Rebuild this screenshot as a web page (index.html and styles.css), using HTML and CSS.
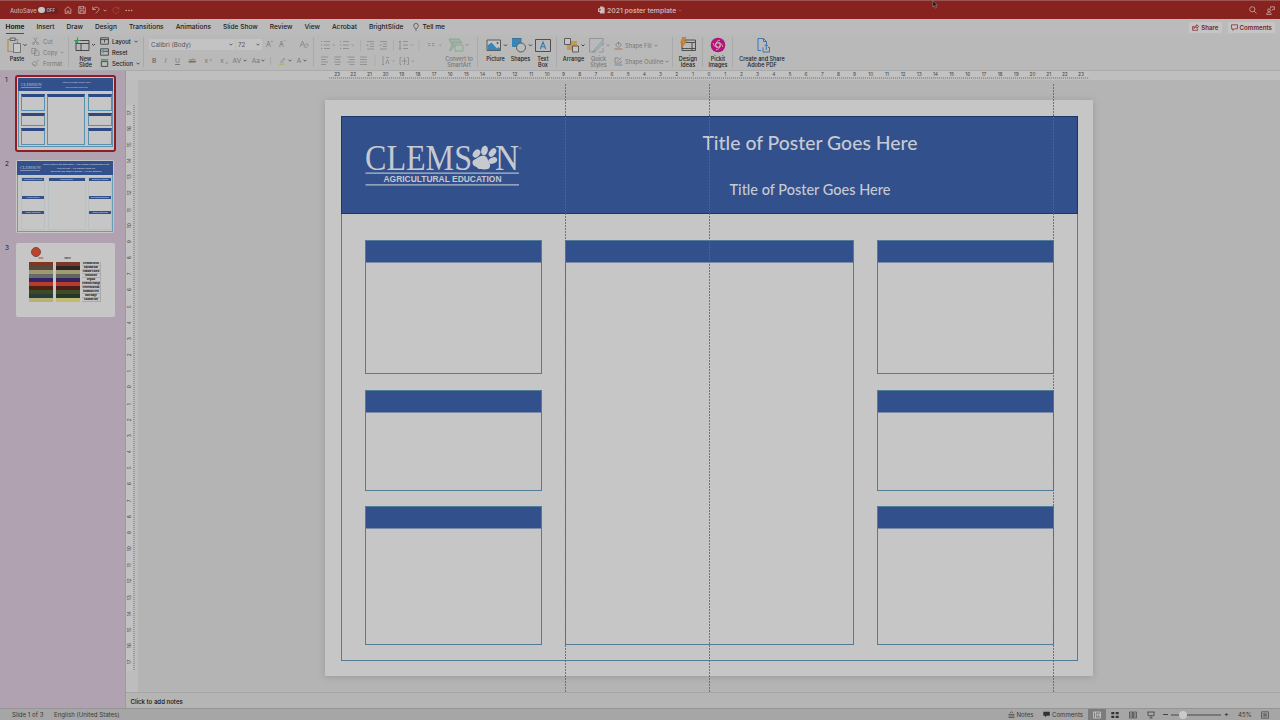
FILE: index.html
```html
<!DOCTYPE html>
<html lang="en">
<head>
    <meta charset="UTF-8">
    <meta name="viewport" content="width=device-width, initial-scale=1.0">
    <title>2021 poster template</title>
    <link rel="stylesheet" href="styles.css">
</head>
<body>
    <header class="titlebar">
        <div class="quick">
            <span class="autosave">AutoSave</span>
            <span class="toggle"><i></i>OFF</span>
            <svg class="qi" width="8" height="8" viewBox="0 0 8 8"><path d="M.7 3.8 4 .7l3.3 3.1M1.2 3.4v4h2V5h1.6v2.4h2v-4"/></svg>
            <svg class="qi" width="8" height="8" viewBox="0 0 8 8"><path d="M.7.7h5.6l1 1v5.6H.7zM2 .7v2.2h3.6V.7M2 7.3V4.8h4v2.5"/></svg>
            <svg class="qi undo" width="8" height="8" viewBox="0 0 8 8"><path d="M.8.6v2.9h3M.9 3.4C2.5.4 6.9.6 7 3.3 7 4.8 5 5.8 3.8 7.4"/></svg>
            <svg class="caret light" viewBox="0 0 4 3"><path d="M.5.7 2 2.2 3.5.7"/></svg>
            <svg class="qi redo" width="8" height="8" viewBox="0 0 8 8"><path d="M6.8 1v2h-2M6.7 2.7A3.1 3.1 0 1 0 7 5"/></svg>
            <svg class="dots" width="8" height="3" viewBox="0 0 8 3"><circle cx="1.2" cy="1.5" r=".8"/><circle cx="3.9" cy="1.5" r=".8"/><circle cx="6.6" cy="1.5" r=".8"/></svg>
        </div>
        <div class="doc-name">
            <svg width="7" height="8" viewBox="0 0 7 8"><path d="M2 .4h3L6.7 2v5.6H2z" fill="#c9b5b3"/><path d="M.2 2.3h4v3.8h-4z" fill="#e0d0cf"/><path d="M1.6 5.4V3h1q.8.8 0 1.4h-1" fill="none" stroke="#8a221e" stroke-width=".6"/></svg>
            <span>2021 poster template</span>
            <svg class="caret dim" viewBox="0 0 4 3"><path d="M.5.7 2 2.2 3.5.7"/></svg>
        </div>
        <div class="title-right">
            <svg class="qi" width="8" height="8" viewBox="0 0 8 8"><circle cx="3.3" cy="3.3" r="2.6"/><path d="M5.2 5.2 7.5 7.5"/></svg>
            <svg class="qi" width="9" height="9" viewBox="0 0 9 9"><circle cx="3" cy="4.2" r="1.4"/><path d="M.6 8.4c0-2.8 4.6-2.8 4.6 0zM4.6 2.3V.8h3.8v2.7H6.8L5.6 4.6"/></svg>
        </div>
        <svg class="cursor" width="6" height="9" viewBox="0 0 6 9"><path d="M.8.5v6.3l1.5-1.3 1 2.6 1.2-.5-1-2.4h1.8z" fill="#111" stroke="#aaa" stroke-width=".5"/></svg>
    </header>

    <nav class="tabbar">
        <div class="tabs">
            <span class="active">Home</span><span>Insert</span><span>Draw</span><span>Design</span><span>Transitions</span><span>Animations</span><span>Slide Show</span><span>Review</span><span>View</span><span>Acrobat</span><span>BrightSlide</span>
        </div>
        <div class="tell">
            <svg width="6" height="8" viewBox="0 0 6 8"><path d="M2 5.6C2 4.6.7 4.2.7 2.7a2.3 2.3 0 0 1 4.6 0C5.3 4.2 4 4.6 4 5.6zM2.2 7.2h1.6" fill="none" stroke="#333" stroke-width=".6"/></svg>
            <span>Tell me</span>
        </div>
        <div class="tab-right">
            <span class="pill"><svg width="7" height="7" viewBox="0 0 7 7"><path d="M2.4 2.5H.6v3.8h5V4.6M1.9 4.6c.2-2 1.3-2.7 2.8-2.7V.7l2 1.8-2 1.7V3C3.3 3 2.6 3.5 1.9 4.6z"/></svg>Share</span>
            <span class="pill"><svg width="7" height="7" viewBox="0 0 7 7"><path d="M.5.8h6v4H3.3L1.9 6.3V4.8H.5z"/></svg>Comments</span>
        </div>
    </nav>

    <section class="ribbon">
        <div class="group g-clip">
            <div class="big paste">
                <svg width="20" height="16" viewBox="0 0 20 16"><path d="M1 2.5h9.5v12H1z" fill="none" stroke="#c08a3e" stroke-width="1.2"/><path d="M3.2 1h5v2.5h-5z" fill="#b9b9b9" stroke="#444" stroke-width=".7"/><path d="M6.5 6.5h7v9h-7z" fill="#c6c6c6" stroke="#555" stroke-width=".7"/><path d="M16.5 7.2 18 8.7l1.5-1.5" fill="none" stroke="#333" stroke-width=".9"/></svg>
                <span>Paste</span>
            </div>
            <div class="rows off">
                <div><svg width="9" height="8" viewBox="0 0 9 8"><path d="M2.8.5 6 6M6.2.5 3 6"/><circle cx="2.4" cy="6.5" r="1"/><circle cx="6.6" cy="6.5" r="1"/></svg>Cut</div>
                <div><svg width="9" height="8" viewBox="0 0 9 8"><path d="M.8.5h4v5h-4zM3.5 2.2h3l1.5 1.5v4H3.5z"/></svg>Copy<svg class="caret" viewBox="0 0 4 3"><path d="M.5.7 2 2.2 3.5.7"/></svg></div>
                <div><svg width="9" height="8" viewBox="0 0 9 8"><path d="M8 .8 5.5 3M3.5 2.2l3 2.8-2 1.5L1 4.8z"/><path d="m1.5 6 3 1.5" stroke="#a98a5c"/></svg>Format</div>
            </div>
        </div>

        <div class="group g-slides">
            <div class="big newslide">
                <svg width="23" height="16" viewBox="0 0 23 16"><path d="M2 3.5h13v10H2zM2 6.5h13M7 6.5v7" fill="none" stroke="#3c3c3c" stroke-width=".9"/><path d="M3.5.5v6M.3 3.5h6.2" stroke="#2f9a55" stroke-width="1.1"/><path d="m18 7 1.5 1.5L21 7" fill="none" stroke="#333" stroke-width=".9"/></svg>
                <span>New<br>Slide</span>
            </div>
            <div class="rows">
                <div><svg width="9" height="8" viewBox="0 0 9 8"><path d="M.6.8h7.8v6.4H.6zM.6 2.6h7.8M4.5 2.6v2.8"/></svg>Layout<svg class="caret" viewBox="0 0 4 3"><path d="M.5.7 2 2.2 3.5.7"/></svg></div>
                <div><svg width="9" height="8" viewBox="0 0 9 8"><path d="M.6.8h7.8v6.4H.6zM3 3.3h5"/><path d="M3.8 1.5 1.5 3.3 3.8 5" stroke="#2d7fb5"/></svg>Reset</div>
                <div><svg width="9" height="8" viewBox="0 0 9 8"><path d="M1.3 2.6h6.4v4.8H1.3z"/><path d="M.8.9h7.4" stroke="#2f8a50" stroke-width="1.2"/></svg>Section<svg class="caret" viewBox="0 0 4 3"><path d="M.5.7 2 2.2 3.5.7"/></svg></div>
            </div>
        </div>

        <div class="group g-font">
            <div class="frow">
                <span class="field name">Calibri (Body)<svg class="caret" viewBox="0 0 4 3"><path d="M.5.7 2 2.2 3.5.7"/></svg></span>
                <span class="field size">72<svg class="caret" viewBox="0 0 4 3"><path d="M.5.7 2 2.2 3.5.7"/></svg></span>
                <span class="grow">A<sup>^</sup></span><span class="shrink">A<sup>ˇ</sup></span>
                <svg class="clear" width="10" height="9" viewBox="0 0 10 9"><path d="M1 7 3.500 1 5.500 5.500M2 4.800h2.500M5 6.500l2.800-3 1.700 1.500-2.800 3z"/></svg>
            </div>
            <div class="frow fmt">
                <b>B</b><em>I</em><u>U</u><s>ab</s><span>x<sup>²</sup></span><span>x<sub>₂</sub></span><span>AV<svg class="caret" viewBox="0 0 4 3"><path d="M.5.7 2 2.2 3.5.7"/></svg></span><span>Aa<svg class="caret" viewBox="0 0 4 3"><path d="M.5.7 2 2.2 3.5.7"/></svg></span>
                <span class="hl"><svg width="8" height="8" viewBox="0 0 8 8"><path d="M2.5 5 6 1l1 1-3.5 4z" fill="none" stroke="#888" stroke-width=".7"/><path d="M1 7.2h5.5" stroke="#b5ae55" stroke-width="1.2"/></svg><svg class="caret" viewBox="0 0 4 3"><path d="M.5.7 2 2.2 3.5.7"/></svg></span>
                <span class="fc">A<svg class="caret" viewBox="0 0 4 3"><path d="M.5.7 2 2.2 3.5.7"/></svg></span>
            </div>
        </div>

        <div class="group g-para">
            <svg width="108" height="36" viewBox="0 0 108 36">
                <path d="M6 6.500h6M6 10h6M6 13.500h6M25 6.500h6M25 10h6M25 13.500h6"/>
                <path d="M3 6.500h1.200M3 10h1.200M3 13.500h1.200M22 6.500h1.200M22 10h1.200M22 13.500h1.200" stroke="#6f8796"/>
                <path d="M49 6.500h7M52 9h4M52 11.500h4M49 14h7M62 6.500h7M65 9h4M65 11.500h4M62 14h7M85 6.500h5M85 10h5M85 13.500h5"/>
                <path d="M48.500 10.200h2M63.500 10.200h-2M82 6v8.500M81 7l1-1 1 1M81 13.500l1 1 1-1" stroke="#6f8796"/>
                <path d="M3 22h7M3 24.500h5M3 27h7M3 29.500h5M16 22h7M17 24.500h5M16 27h7M17 29.500h5M29.500 22h7M31.500 24.500h5M29.500 27h7M31.500 29.500h5M42 22h7M42 24.500h7M42 27h7M42 29.500h7"/>
                <path d="M65 21v9M64 29l1 1 1-1M68 29l1.500-4.500L71 29M68 22.500h3M83.500 22.500H82v7h1.500M89 22.500h1.500v7H89M84 26h5M86.500 22v8"/>
                <path d="m14.500 9.500 1.200 1.200 1.200-1.200M33.500 9.500l1.200 1.200 1.200-1.200M93 9.500l1.200 1.200 1.200-1.200M74 25.500l1.200 1.200 1.200-1.200M93.500 25.500l1.200 1.200 1.200-1.200"/>
                <path d="M42.500 5v11M75.500 5v11M57 20v11M101 5v11" stroke="#a9a9a9"/>
            </svg>
            <svg class="cols" width="18" height="36" viewBox="0 0 18 36"><path d="M1 8.500h2.500M5 8.500h2.500M1 10.500h2.500M5 10.500h2.500M12 9.500l1.200 1.200 1.200-1.200"/></svg>
            <div class="big off smart">
                <svg width="24" height="16" viewBox="0 0 24 16"><path d="M2 2h10l3 4H5.5l2 3-4 4.500h-1L5 8z" fill="#9fb3a3" stroke="#7f9f86" stroke-width=".7"/><path d="M8 8h8v6H8z" fill="#b4bcb5" stroke="#7f9f86" stroke-width=".7"/><path d="m18.500 7 1.500 1.500L21.500 7" fill="none" stroke="#888" stroke-width=".9"/></svg>
                <span>Convert to<br>SmartArt</span>
            </div>
        </div>

        <div class="group g-insert">
            <div class="big">
                <svg width="24" height="16" viewBox="0 0 24 16"><path d="M3 3h13.500v10.500H3z" fill="#bfc4c7" stroke="#444" stroke-width=".8"/><path d="m3.500 8.500 4-3 5.500 6 1.500-1.500 1.800 1.500V13H3.500z" fill="#3a85b5"/><circle cx="13.500" cy="6" r="1" fill="#555"/><path d="m20 7.500 1.500 1.500L23 7.500" fill="none" stroke="#333" stroke-width=".9"/></svg>
                <span>Picture</span>
            </div>
            <div class="big">
                <svg width="24" height="16" viewBox="0 0 24 16"><path d="M3 1.500h9.500v8.500H3z" fill="#3a85b5"/><path d="M3 1.500h9.500" stroke="#245e86" stroke-width=".7"/><circle cx="12" cy="10.500" r="4.500" fill="#bcbcbc" stroke="#444" stroke-width=".8"/><path d="m20 7.500 1.500 1.500L23 7.500" fill="none" stroke="#333" stroke-width=".9"/></svg>
                <span>Shapes</span>
            </div>
            <div class="big textbox">
                <svg width="18" height="16" viewBox="0 0 18 16"><path d="M1.500 2.500h15v12h-15z" fill="none" stroke="#444" stroke-width=".9"/><path d="M6.300 12 9 5l2.700 7M7.200 9.800h3.600" fill="none" stroke="#2f7cae" stroke-width="1.100"/></svg>
                <span>Text<br>Box</span>
            </div>
        </div>

        <div class="group g-draw">
            <div class="big arrange">
                <svg width="24" height="16" viewBox="0 0 24 16"><path d="M5 4h10v9H5z" fill="#c29a4d"/><path d="M2.500 1.500h6v6h-6zM10.500 9h6v6h-6z" fill="#c4c4c4" stroke="#444" stroke-width=".8"/><path d="m19.500 7.500 1.500 1.500 1.500-1.500" fill="none" stroke="#333" stroke-width=".9"/></svg>
                <span>Arrange</span>
            </div>
            <div class="big off styles">
                <svg width="24" height="16" viewBox="0 0 24 16"><path d="M2.500 1.500H16v7M2.500 1.500V15H9M16 11v4h-4" fill="none" stroke="#858585" stroke-width=".7"/><path d="m16.500 2.500-8 9-3 3.500 4-1.500 7.500-8" fill="#a8b4b8" stroke="#7b8e96" stroke-width=".7"/><path d="m19.500 7.500 1.500 1.500 1.500-1.500" fill="none" stroke="#888" stroke-width=".9"/></svg>
                <span>Quick<br>Styles</span>
            </div>
            <div class="shape-rows off">
                <div><svg width="9" height="9" viewBox="0 0 9 9"><path d="M1.500 4 4.500 1l3 3-3 2.500zM4.500 1v3" fill="none" stroke="#777" stroke-width=".7"/><path d="M.5 8h8" stroke="#a8806a" stroke-width="1.200"/></svg>Shape Fill<svg class="caret" viewBox="0 0 4 3"><path d="M.5.7 2 2.2 3.5.7"/></svg></div>
                <div><svg width="9" height="9" viewBox="0 0 9 9"><path d="M7 3.500V6H1V1h4M3 4.500 7.500.8" fill="none" stroke="#777" stroke-width=".7"/><path d="M.5 8h8" stroke="#7296b5" stroke-width="1.200"/></svg>Shape Outline<svg class="caret" viewBox="0 0 4 3"><path d="M.5.7 2 2.2 3.5.7"/></svg></div>
            </div>
        </div>

        <div class="group g-ideas">
            <div class="big">
                <svg width="18" height="16" viewBox="0 0 18 16"><path d="M3 3h13.500v10.500H3zM3 5.500h13.500M13 5.500v8M3 11.500h13.500" fill="none" stroke="#444" stroke-width=".9"/><path d="M3.500 0h3.500L5.500 4H8L2.500 11l1-5H1.500z" fill="#c98740" stroke="#b46a2a" stroke-width=".4"/></svg>
                <span>Design<br>Ideas</span>
            </div>
        </div>
        <div class="group g-pickit">
            <div class="big">
                <svg width="16" height="16" viewBox="0 0 16 16"><circle cx="8" cy="8" r="7.300" fill="#b5137a"/><circle cx="8" cy="8" r="2.300" fill="none" stroke="#ccb" stroke-width="1"/><path d="M5.700 8c0-3 1.800-4.500 4.300-4.800M8 5.700c3 0 4.500 1.800 4.800 4.300M10.300 8c0 3-1.800 4.500-4.300 4.800M8 10.300C5 10.300 3.500 8.500 3.200 6" fill="none" stroke="#ccb" stroke-width=".8"/></svg>
                <span>Pickit<br>Images</span>
            </div>
        </div>
        <div class="group g-pdf">
            <div class="big">
                <svg width="16" height="16" viewBox="0 0 16 16"><path d="M7 13.500H4v-12h5.500l3 3V8M9.500 1.500v3h3M9 10.500V15h6.500v-4.500H14M12.300 13V7.500M10.500 9.200l1.800-1.800 1.800 1.800" fill="none" stroke="#2f6fb0" stroke-width=".9"/></svg>
                <span>Create and Share<br>Adobe PDF</span>
            </div>
        </div>
    </section>

    <main class="work">
        <aside class="panel">
            <div class="thumb-row">
                <span class="num">1</span>
                <div class="thumb selected">
                    <div class="t-head">
                        <span class="t-logo">CLEMSON</span>
                        <div class="t-title"><span>Title of Poster Goes Here</span><span class="sub">Title of Poster Goes Here</span></div>
                    </div>
                    <div class="t-body">
                        <div class="t-col"><i></i><i></i><i></i></div>
                        <div class="t-col"><i></i></div>
                        <div class="t-col"><i></i><i></i><i></i></div>
                    </div>
                </div>
            </div>
            <div class="thumb-row">
                <span class="num">2</span>
                <div class="thumb second">
                    <div class="t-head">
                        <span class="t-logo">CLEMSON</span>
                        <div class="t-title"><b>This is where the title goes – Use Times New Roman Font</b><b>120 pt font – No Smaller than 96</b><b>Describe the study's design – if your authors</b></div>
                    </div>
                    <div class="t-body">
                        <div class="t-col"><i>Introduction/Need</i><i>Need/Theory</i><i>Study Methods</i></div>
                        <div class="t-col"><i>Data/Results</i></div>
                        <div class="t-col"><i>Results/Findings</i><i>Recommendations</i><i>Study/Methods</i></div>
                    </div>
                </div>
            </div>
            <div class="thumb-row">
                <span class="num">3</span>
                <div class="thumb third">
                    <i class="ball"></i>
                    <div class="palette" id="palette">
                        <span class="rgb">RGB</span><span>CMYK</span><span></span>
                    </div>
                </div>
            </div>
        </aside>

        <div class="editor">
            <div class="hruler"><div class="htrack" id="hruler"></div></div>
            <div class="vruler"><div class="vtrack" id="vruler"></div></div>
            <div class="stage">
                <div class="slide">
                    <div class="frame">
                        <div class="banner">
                            <svg class="logo" width="158" height="44" viewBox="0 0 158 44">
                                <g fill="#c6c9cf" font-family="Liberation Serif, serif">
                                    <text x="0" y="24.500" font-size="35" textLength="107" lengthAdjust="spacingAndGlyphs">CLEMS</text>
                                    <text x="130" y="24.500" font-size="35" textLength="24" lengthAdjust="spacingAndGlyphs">N</text>
                                    <text x="153.500" y="5" font-size="4">®</text>
                                    <text x="18.500" y="37.300" font-family="Liberation Sans, sans-serif" font-weight="bold" font-size="8.800" textLength="118" lengthAdjust="spacingAndGlyphs">AGRICULTURAL EDUCATION</text>
                                </g>
                                <path d="M.5 28.200H154M.5 39.800H154" stroke="#b4bac6" stroke-width="1.200"/>
                                <g fill="#c6c9cf">
                                    <ellipse cx="111.500" cy="8.500" rx="3.200" ry="4.600" transform="rotate(38 111.500 8.500)"/>
                                    <ellipse cx="119.500" cy="5.500" rx="3.300" ry="4.900" transform="rotate(14 119.500 5.500)"/>
                                    <ellipse cx="127.500" cy="7.500" rx="3" ry="4.800" transform="rotate(38 127.500 7.500)"/>
                                    <ellipse cx="127.800" cy="15.500" rx="3.100" ry="4.600" transform="rotate(68 127.800 15.500)"/>
                                    <path d="M107.500 17.500c0-3 3-3 5.500-5 3-2.300 7.500-2.300 9 .2 1 1.800 1.500 3.500 2.500 5.300 1.300 2.500.5 5.500-1.700 6-2 .4-3.300.8-5.300.2-1.500-.4-2.500.3-4-.5-1.200-.7-1.500-1.700-3-2.200-2-.6-3-2-3-4z"/>
                                </g>
                            </svg>
                            <div class="heads">
                                <h1>Title of Poster Goes Here</h1>
                                <h2>Title of Poster Goes Here</h2>
                            </div>
                        </div>
                        <div class="columns">
                            <div class="col"><div class="box"></div><div class="box"></div><div class="box"></div></div>
                            <div class="col wide"><div class="box"></div></div>
                            <div class="col"><div class="box"></div><div class="box"></div><div class="box"></div></div>
                        </div>
                    </div>
                </div>
                <i class="guide g1"></i><i class="guide g2"></i><i class="guide g3"></i>
            </div>
            <div class="notes">Click to add notes</div>
        </div>
    </main>

    <footer class="status">
        <span class="s-slide">Slide 1 of 3</span>
        <span>English (United States)</span>
        <div class="s-right">
            <svg width="7" height="7" viewBox="0 0 7 7"><path d="M1.800 2.200 3.500.7l1.700 1.500M.5 3.500h6M.5 5h6M.5 6.500h6" fill="none" stroke="#444" stroke-width=".7"/></svg>
            <span class="s-notes">Notes</span>
            <svg width="7" height="7" viewBox="0 0 7 7"><path d="M.3.8h6.500v4H3.300L2 6.500V4.800H.3z" fill="#333"/></svg>
            <span class="s-comm">Comments</span>
            <span class="view on"><svg width="8" height="8" viewBox="0 0 8 8"><path d="M.5 1h7v6h-7zM2.500 1v6M4 3h2.500v1.800H4z" fill="none" stroke="#ccc" stroke-width=".8"/></svg></span>
            <span class="view"><svg width="8" height="8" viewBox="0 0 8 8"><path d="M.3 1h3v2.300h-3zM4.700 1h3v2.300h-3zM.3 4.700h3V7h-3zM4.700 4.700h3V7h-3z" fill="#333"/></svg></span>
            <span class="view"><svg width="8" height="8" viewBox="0 0 8 8"><path d="M.5 1h3.200v6H.5zM4.300 1h3.200v6H4.300zM1.200 3h2M4.800 3h2M1.200 5h2M4.800 5h2" fill="none" stroke="#444" stroke-width=".7"/></svg></span>
            <span class="view"><svg width="8" height="8" viewBox="0 0 8 8"><path d="M.2 1h7.600M1 1v3.700h6V1M4 4.700v2M2.500 7h3" fill="none" stroke="#444" stroke-width=".8"/></svg></span>
            <span class="zoom-step minus"></span>
            <span class="slider"><i></i></span>
            <span class="zoom-step plus">+</span>
            <span class="pct">45%</span>
            <svg width="8" height="8" viewBox="0 0 8 8"><path d="M.5.8h7v6.400h-7zM4 1.500v5M1.300 4h5.400M2 2.200l1 1M6 2.200l-1 1M2 5.800l1-1M6 5.800l-1-1" fill="none" stroke="#444" stroke-width=".7"/></svg>
        </div>
    </footer>

    <script>
        // ruler numbers count outwards from the slide centre
        function fillRuler(id, max) {
            const track = document.getElementById(id);
            for (let n = -max; n <= max; n++) {
                const cell = document.createElement('span');
                cell.textContent = Math.abs(n);
                track.appendChild(cell);
            }
        }
        fillRuler('hruler', 23);
        fillRuler('vruler', 17);

        const colors = [
            ['#803620', '#7b3829', 'Clemson Brick'],
            ['#544a40', '#2e2624', 'Diploma Oak'],
            ['#a09872', '#a39b70', 'Howard\'s Rock'],
            ['#656c68', '#60655f', 'Innovation'],
            ['#35206a', '#36205e', 'Regalia'],
            ['#b93c27', '#b63c2c', 'Clemson Orange'],
            ['#4d1f16', '#4b1c19', 'Centennial Oak'],
            ['#3e4a20', '#3f4b20', 'Bowman Field'],
            ['#263c3e', '#24372f', 'Blue Ridge'],
            ['#b9b073', '#c3ba6c', 'Calhoun Sky']
        ];
        const palette = document.getElementById('palette');
        colors.forEach(([rgb, cmyk, name]) => {
            palette.insertAdjacentHTML('beforeend',
                `<i style="background:${rgb}"></i><i style="background:${cmyk}"></i><b>${name}</b>`);
        });
    </script>
</body>
</html>
```
FILE: styles.css
```css
* {
    box-sizing: border-box;
}
body {
    margin: 0;
    width: 1280px;
    height: 720px;
    overflow: hidden;
    display: flex;
    flex-direction: column;
    font-family: Inter, "Liberation Sans", sans-serif;
    font-size: 6px;
    color: #1c1c1c;
    background: #b5b5b5;
}
svg {
    display: block;
    flex: none;
}
i {
    font-style: normal;
}
.caret {
    width: 4px;
    height: 3px;
    fill: none;
    stroke: #444;
    stroke-width: 0.8;
}
.off .caret {
    stroke: #777;
}

/* title bar */
.titlebar {
    position: relative;
    height: 19px;
    flex: none;
    display: flex;
    align-items: center;
    justify-content: space-between;
    background: #88221e;
    border-top: 1px solid #9c5350;
    color: #c9b0ae;
}
.quick {
    display: flex;
    align-items: center;
    width: 598px;
    padding-left: 10px;
}
.autosave {
    width: 28px;
    font-size: 5.8px;
    font-weight: 500;
}
.toggle {
    width: 20px;
    height: 7px;
    display: flex;
    align-items: center;
    gap: 2px;
    border-radius: 4px;
    background: #672522;
    font-size: 4.4px;
    font-weight: 600;
    margin-right: 6px;
}
.toggle i {
    width: 6.5px;
    height: 6.5px;
    border-radius: 50%;
    background: #c9c4c4;
}
.qi {
    fill: none;
    stroke: #c9aeac;
    stroke-width: 0.8;
    margin-right: 6px;
}
.undo {
    margin-right: 3px;
}
.light {
    stroke: #c9aeac;
    margin-right: 5px;
}
.dim {
    stroke: #a8605d;
}
.redo {
    stroke: #9d4a47;
    margin-right: 5px;
}
.dots {
    fill: #c9aeac;
}
.doc-name {
    display: flex;
    align-items: center;
    gap: 2px;
    flex: 1;
    font-size: 6.8px;
    font-weight: 600;
}
.title-right {
    display: flex;
    gap: 4px;
    align-items: center;
}
.title-right .qi {
    margin-right: 5px;
}
.cursor {
    position: absolute;
    left: 932px;
    top: -1px;
}

/* tabs */
.tabbar {
    height: 16px;
    flex: none;
    display: flex;
    align-items: center;
    background: #bbb;
    font-size: 6.6px;
    font-weight: 500;
}
.tabs {
    width: 398px;
    margin-left: 5.5px;
    display: flex;
    justify-content: space-between;
}
.tabs span {
    line-height: 10px;
    padding-top: 1px;
    padding-bottom: 1px;
    border-bottom: 1.5px solid transparent;
}
.tabs .active {
    font-weight: 700;
    border-bottom-color: #97302c;
}
.tell {
    display: flex;
    align-items: center;
    gap: 4px;
    margin-left: 9px;
}
.tab-right {
    display: flex;
    gap: 6px;
    margin-left: auto;
    margin-right: 5px;
    padding-top: 1px;
}
.pill {
    display: flex;
    align-items: center;
    gap: 2px;
    height: 11px;
    padding: 0 3px;
    background: #c5c5c5;
    color: #7c1f1f;
    font-size: 6.2px;
    font-weight: 600;
}
.pill svg {
    fill: none;
    stroke: #7c1f1f;
    stroke-width: 0.7;
}

/* ribbon */
.ribbon {
    height: 36px;
    flex: none;
    display: flex;
    background: #b9b9b9;
    border-bottom: 1px solid #aaa;
}
.group {
    display: flex;
    flex: none;
    background: linear-gradient(#a9a9a9, #a9a9a9) right 2px / 1px 30px no-repeat;
}
.big {
    display: flex;
    flex-direction: column;
    align-items: center;
    padding-top: 2px;
    text-align: center;
    font-size: 5.5px;
    font-weight: 500;
    line-height: 6px;
    white-space: nowrap;
}
.big span {
    margin-top: 3px;
}
.off {
    color: #777;
}
.rows {
    display: flex;
    flex-direction: column;
    gap: 3px;
    padding-top: 2px;
    font-size: 5.8px;
    font-weight: 500;
}
.rows.off {
    font-weight: 400;
}
.rows div {
    display: flex;
    align-items: center;
    gap: 3px;
    height: 8px;
}
.rows svg {
    fill: none;
    stroke: #333;
    stroke-width: 0.8;
}
.rows.off svg {
    stroke: #858585;
}
.g-clip {
    width: 69px;
    padding-left: 7px;
}
.paste {
    width: 20px;
    margin-right: 4px;
}
.g-slides {
    width: 75px;
    padding-left: 5px;
}
.newslide {
    width: 23px;
    margin-right: 3px;
}
.g-font {
    width: 170px;
    flex-direction: column;
    padding: 4px 0 0 5px;
    color: #757575;
}
.frow {
    display: flex;
    align-items: center;
    height: 11px;
}
.field {
    display: flex;
    align-items: center;
    justify-content: space-between;
    height: 11px;
    padding: 0 2px;
    background: #c3c3c3;
    color: #555;
    font-size: 6.2px;
}
.name {
    width: 86px;
    margin-right: 1px;
}
.size {
    width: 26px;
}
.grow, .shrink {
    width: 13px;
    padding-left: 4px;
    font-size: 7px;
}
.clear {
    margin-left: 11px;
    fill: none;
    stroke: #858585;
    stroke-width: 0.8;
}
sup, sub {
    font-size: 5px;
    line-height: 0;
}
.fmt {
    margin-top: 5px;
    font-size: 6.5px;
    gap: 8.5px;
    padding-left: 3px;
}
.fmt span {
    display: flex;
    align-items: center;
    gap: 1.5px;
}
.fmt span:nth-of-type(n+3) {
    margin-left: -3.5px;
}
.fmt .hl {
    padding-left: 7px;
    border-left: 1px solid #a9a9a9;
}
.g-para {
    width: 164px;
}
.g-para svg {
    fill: none;
    stroke: #888;
    stroke-width: 0.8;
    margin-left: 4px;
}
.g-para .cols {
    margin-left: 1px;
}
.smart {
    width: 30px;
    margin-left: -1px;
}
.smart svg {
    margin-left: 0;
}
.g-insert {
    width: 79px;
    padding-left: 5px;
}
.g-insert .big {
    width: 25px;
}
.g-insert .textbox {
    width: 20px;
}
.g-draw {
    width: 116px;
    padding-left: 4px;
}
.g-draw .big {
    width: 25px;
}
.shape-rows {
    margin-left: 3px;
    padding-top: 6px;
    font-size: 5.8px;
    white-space: nowrap;
}
.shape-rows div {
    display: flex;
    align-items: center;
    gap: 2px;
    height: 9px;
    margin-bottom: 7px;
}
.g-ideas, .g-pickit {
    width: 30px;
    justify-content: center;
}
.g-pdf {
    width: 58px;
    justify-content: center;
    background: none;
}

/* slide panel */
.work {
    flex: 1;
    min-height: 0;
    display: flex;
}
.panel {
    width: 125px;
    padding: 4px 0 0 3px;
    background: #b0a2b0;
}
.thumb-row {
    display: flex;
    height: 84px;
}
.num {
    width: 12px;
    padding: 1px 0 0 2px;
    font-size: 6.5px;
}
.thumb {
    width: 101px;
    height: 77px;
    background: #c6c6c6;
    padding: 2px;
}
.thumb.selected {
    border: 2px solid #921d1d;
    border-radius: 3px;
    padding: 1px;
}
.thumb.second {
    width: 98px;
    height: 73px;
    margin: 1px 0 0 1px;
    padding: 1px;
    border-radius: 2px;
}
.thumb.third {
    position: relative;
    width: 99px;
    height: 74px;
    margin: 0 0 0 1px;
    border-radius: 2px;
}
.t-head {
    height: 13px;
    display: flex;
    align-items: center;
    background: #32508c;
    color: #b9c2d2;
}
.t-logo {
    width: 20px;
    margin-left: 3px;
    font: 4.3px "Liberation Serif", serif;
    border-bottom: 1px solid #8090b4;
}
.t-title {
    flex: 1;
    display: flex;
    flex-direction: column;
    align-items: center;
    gap: 2px;
    padding-right: 1px;
    font: bold 2.5px/3px Lato, sans-serif;
    white-space: nowrap;
}
.t-title .sub {
    font-size: 2px;
}
.second .t-title {
    gap: 0.5px;
    font-size: 2.6px;
}
.second .t-head {
    height: 14px;
}
.t-body {
    display: grid;
    grid-template-columns: 24px 38px 24px;
    column-gap: 2.5px;
    height: 56px;
    padding: 3px 0 1px 1.5px;
    border: 1px solid #5a90ad;
    border-top: 0;
}
.t-col {
    display: flex;
    flex-direction: column;
    gap: 2px;
}
.t-col i {
    flex: 18;
    border: 1px solid #5a90ad;
    border-top: 3px solid #2b4a85;
}
.t-col i:nth-child(2) {
    flex: 13;
}
.second .t-body {
    border-color: #6a9cb5;
    padding-left: 3px;
    padding-top: 2px;
    height: 57px;
}
.second .t-col {
    gap: 0;
    border: 1px solid #b9c0c4;
}
.second .t-col i {
    border: 0;
    flex: 19;
    color: #c0c8d4;
    font: bold 2.2px/3px Lato, sans-serif;
    text-align: center;
    white-space: nowrap;
    background: linear-gradient(#32508c, #32508c) top / 100% 3px no-repeat;
}
.second .t-col i:nth-child(2) {
    flex: 15;
}
.ball {
    position: absolute;
    left: 15px;
    top: 4px;
    width: 10px;
    height: 10px;
    border: 1px solid #714d49;
    border-radius: 50%;
    background: #bf422b;
}
.palette {
    display: grid;
    grid-template-columns: 24px 24px 19px;
    column-gap: 2.5px;
    margin: 12px 0 0 11px;
    grid-template-rows: 4.5px;
    grid-auto-rows: 4.1px;
    font-size: 2.2px;
    font-weight: 600;
    line-height: 4px;
    text-align: center;
    white-space: nowrap;
}
.palette .rgb {
    color: #b03028;
}
.palette b {
    border-bottom: 0.5px solid #aaa;
    border-right: 0.5px solid #aaa;
    overflow: hidden;
}

/* editor */
.editor {
    flex: 1;
    min-width: 0;
    display: grid;
    grid-template: 9px 612px 16px / 12px 1fr;
    background: #b5b5b5;
    border-left: 1px solid #9b9b9b;
}
.hruler {
    grid-column: 1 / 3;
    display: flex;
    justify-content: flex-start;
    padding-left: 203px;
    background: #bfbfbf;
    overflow: hidden;
}
.htrack {
    display: flex;
    flex: none;
    height: 8px;
    background: repeating-linear-gradient(90deg, #9a9a9a 0 1px, #bcbcbc 1px 2px) 0 100% / 100% 2px no-repeat, #c2c2c2;
}
.htrack span {
    width: 16.174px;
    font-size: 4.8px;
    line-height: 6px;
    text-align: center;
    color: #444;
}
.vruler {
    background: #bdbdbd;
    overflow: hidden;
    padding-top: 24.5px;
}
.vtrack {
    width: 9px;
    background: repeating-linear-gradient(#9a9a9a 0 1px, #bcbcbc 1px 2px) 100% 0 / 2px 100% no-repeat, #c2c2c2;
}
.vtrack span {
    display: block;
    width: 6px;
    height: 16.174px;
    writing-mode: vertical-rl;
    transform: rotate(180deg);
    font-size: 4.8px;
    line-height: 6px;
    text-align: center;
    color: #444;
}
.stage {
    position: relative;
    padding: 20px 0 0 187px;
    background: #b4b4b4;
}
.slide {
    width: 768px;
    height: 576px;
    padding: 16px;
    background: #c6c6c6;
    box-shadow: 0 1px 7px #999;
}
.frame {
    width: 737px;
    height: 545px;
    border: 1px solid #527d99;
}
.banner {
    display: flex;
    height: 98px;
    margin: -1px -1px 0;
    background: #32508c;
    border: 1px solid #1b3769;
}
.logo {
    margin: 28px 0 0 23px;
    overflow: visible;
}
.heads {
    width: 572px;
    margin-left: 0;
    padding-left: 20px;
    text-align: center;
    color: #c6cad2;
}
h1, h2 {
    margin: 0;
    font-family: Lato, sans-serif;
    font-weight: 500;
    white-space: nowrap;
}
h1 {
    font-size: 19.4px;
    line-height: 24px;
    margin-top: 14px;
}
h2 {
    font-size: 14.5px;
    line-height: 20px;
    margin-top: 25px;
}
.columns {
    display: grid;
    grid-template-columns: 177px 289px 177px;
    gap: 23px;
    height: 405px;
    margin: 26px 0 0 23px;
}
.col {
    display: grid;
    grid-template-rows: 134px 101px 139px;
    row-gap: 15.5px;
}
.col.wide {
    grid-template-rows: 405px;
}
.box {
    border: 1px solid #527d99;
    background: linear-gradient(#32508c, #32508c) top / 100% 21.5px no-repeat;
}
.guide {
    position: absolute;
    top: 4px;
    bottom: 0;
    width: 1px;
    background: repeating-linear-gradient(rgba(100, 100, 100, 0.85) 0 2px, transparent 2px 3px);
}
.g1 {
    left: 427px;
}
.g2 {
    left: 571px;
}
.g3 {
    left: 915px;
}
.notes {
    grid-column: 1 / 3;
    border-top: 1px solid #a5a5a5;
    padding-left: 4.5px;
    font-size: 6.1px;
    font-weight: 500;
    line-height: 17px;
    color: #111;
}

/* status bar */
.status {
    height: 12px;
    flex: none;
    display: flex;
    align-items: center;
    background: #a6a6a6;
    border-top: 1px solid #959595;
    font-size: 6.1px;
    color: #3a3a3a;
}
.s-slide {
    width: 42px;
    margin-left: 12px;
}
.s-right {
    display: flex;
    align-items: center;
    margin-left: auto;
    width: 272px;
    height: 12px;
}
.s-notes {
    width: 28px;
    padding-left: 1.5px;
}
.s-comm {
    width: 38px;
    padding-left: 2px;
}
.view {
    width: 18px;
    height: 12px;
    display: flex;
    align-items: center;
    justify-content: center;
}
.view.on {
    background: #7c7c7c;
}
.zoom-step {
    width: 5px;
    height: 1.5px;
    margin: 0 3px;
    background: #444;
}
.plus {
    height: auto;
    background: none;
    font-size: 7px;
    font-weight: 600;
}
.slider {
    width: 50px;
    height: 2px;
    background: #777;
}
.slider i {
    display: block;
    width: 8px;
    height: 8px;
    margin: -3px 0 0 8px;
    border-radius: 50%;
    background: #cacaca;
}
.pct {
    width: 29px;
    padding-left: 6px;
}
```
